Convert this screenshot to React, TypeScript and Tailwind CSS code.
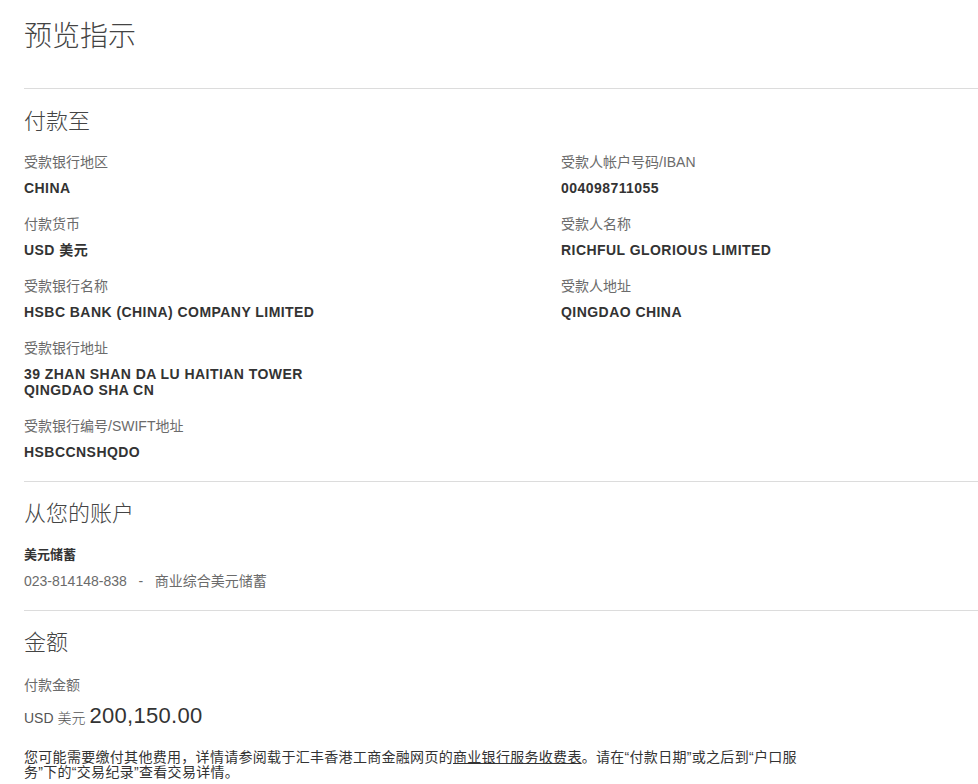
import React from "react";

const fields: { label: string; value: string[] }[][] = [
    [
        { label: "受款银行地区", value: ["CHINA"] },
        { label: "付款货币", value: ["USD 美元"] },
        { label: "受款银行名称", value: ["HSBC BANK (CHINA) COMPANY LIMITED"] },
        { label: "受款银行地址", value: ["39 ZHAN SHAN DA LU HAITIAN TOWER", "QINGDAO SHA CN"] },
        { label: "受款银行编号/SWIFT地址", value: ["HSBCCNSHQDO"] },
    ],
    [
        { label: "受款人帐户号码/IBAN", value: ["004098711055"] },
        { label: "受款人名称", value: ["RICHFUL GLORIOUS LIMITED"] },
        { label: "受款人地址", value: ["QINGDAO CHINA"] },
    ],
];

function Field({ label, value }: { label: string; value: string[] }) {
    return (
        <div>
            <div className="text-sm leading-5 text-[#6b6b6b]">{label}</div>
            <div className="mt-2 text-[14px] leading-4 font-bold tracking-[0.45px] text-[#333]">
                {value.map((v) => (
                    <div key={v}>{v}</div>
                ))}
            </div>
        </div>
    );
}

function Heading({ children }: { children: React.ReactNode }) {
    return <h2 className="text-[22px] leading-7 font-light text-[#444]">{children}</h2>;
}

export default function App() {
    return (
        <div
            className="min-h-screen bg-white pt-[19px] pl-6 text-[#333]"
            style={{ fontFamily: '"Liberation Sans", Arial, "Noto Sans CJK SC", sans-serif' }}
        >
            <h1 className="text-[28px] leading-9 font-light text-[#444]">预览指示</h1>

            {/* 付款至 */}
            <section className="mt-[33px] border-t border-[#dcdcdc] pt-[19px] pb-[21px]">
                <Heading>付款至</Heading>
                <div className="mt-4 grid grid-cols-[537px_1fr]">
                    {fields.map((col, i) => (
                        <div key={i} className="flex flex-col gap-[18px]">
                            {col.map((f) => (
                                <Field key={f.label} {...f} />
                            ))}
                        </div>
                    ))}
                </div>
            </section>

            {/* 从您的账户 */}
            <section className="border-t border-[#dcdcdc] pt-[18px] pb-[19px]">
                <Heading>从您的账户</Heading>
                <div className="mt-[19px] text-[13px] leading-4 font-bold text-[#333]">美元储蓄</div>
                <div className="mt-2 text-sm leading-5 text-[#6b6b6b]">
                    023-814148-838 &nbsp; - &nbsp; 商业综合美元储蓄
                </div>
            </section>

            {/* 金额 */}
            <section className="border-t border-[#dcdcdc] pt-[18px]">
                <Heading>金额</Heading>
                <div className="mt-[18px] text-sm leading-5 text-[#6b6b6b]">付款金额</div>
                <div className="mt-[7px] flex items-baseline gap-1 leading-7">
                    <span className="text-sm font-light text-[#555]">USD 美元</span>
                    <span className="text-[22px] tracking-[0.3px] text-[#333]">200,150.00</span>
                </div>
                <p className="mt-5 w-[800px] text-sm leading-[15px] tracking-[0.3px] text-[#333]">
                    您可能需要缴付其他费用，详情请参阅载于汇丰香港工商金融网页的
                    <a className="underline">商业银行服务收费表</a>。请在“付款日期”或之后到“户口服
                    <br />
                    务”下的“交易纪录”查看交易详情。
                </p>
            </section>
        </div>
    );
}
